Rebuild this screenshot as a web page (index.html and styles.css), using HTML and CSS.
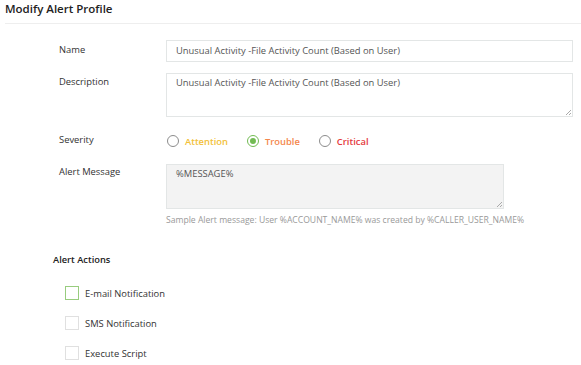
FILE: index.html
```html
<!DOCTYPE html>
<html>
<head>
<meta charset="utf-8">
<link rel="stylesheet" href="styles.css">
</head>
<body>
<div class="page">
  <h1 class="title">Modify Alert Profile</h1>
  <div class="form">
    <div class="row row-name">
      <label class="label">Name</label>
      <div class="input">Unusual Activity -File Activity Count (Based on User)</div>
    </div>
    <div class="row row-desc">
      <label class="label">Description</label>
      <div class="textarea">Unusual Activity -File Activity Count (Based on User)<span class="grip"></span></div>
    </div>
    <div class="row row-sev">
      <label class="label">Severity</label>
      <div class="radios">
        <span class="radio-item"><span class="radio"></span><span class="sev attention">Attention</span></span>
        <span class="radio-item"><span class="radio checked"></span><span class="sev trouble">Trouble</span></span>
        <span class="radio-item"><span class="radio"></span><span class="sev critical">Critical</span></span>
      </div>
    </div>
    <div class="row row-msg">
      <label class="label">Alert Message</label>
      <div class="msg-col">
        <div class="textarea msg">%MESSAGE%<span class="grip"></span></div>
        <div class="hint">Sample Alert message: User %ACCOUNT_NAME% was created by %CALLER_USER_NAME%</div>
      </div>
    </div>
  </div>
  <h2 class="section">Alert Actions</h2>
  <div class="actions">
    <div class="check-item"><span class="box active"></span>E-mail Notification</div>
    <div class="check-item"><span class="box"></span>SMS Notification</div>
    <div class="check-item"><span class="box"></span>Execute Script</div>
  </div>
</div>
</body>
</html>
```
FILE: styles.css
```css
html, body {
  margin: 0;
  padding: 0;
  background: #ffffff;
}
body {
  font-family: "Open Sans", "Noto Sans", sans-serif;
  font-size: 9.4px;
  color: #333;
}
.page {
  width: 581px;
  height: 365px;
  overflow: hidden;
}
.title {
  margin: 0 0 0 5px;
  padding-top: 1px;
  height: 22px;
  line-height: 16px;
  font-size: 11.5px;
  font-weight: 600;
  color: #222;
  border-bottom: 1px solid #eeeeee;
}
.form {
  padding: 16px 8px 0 59px;
  display: flex;
  flex-direction: column;
}
.row {
  display: flex;
  align-items: flex-start;
}
.label {
  width: 107px;
  flex: none;
  color: #333;
  line-height: 16px;
}
.row-name .label { padding-top: 2px; }
.input {
  flex: 1;
  height: 20px;
  border: 1px solid #e3e6e6;
  padding: 0 9px;
  line-height: 20px;
  color: #555;
  box-sizing: content-box;
}
.row-desc { margin-top: 11px; }
.row-desc .label { padding-top: 1px; }
.textarea {
  position: relative;
  flex: 1;
  height: 42px;
  border: 1px solid #e3e6e6;
  padding: 0 9px;
  line-height: 18px;
  color: #555;
}
.grip {
  position: absolute;
  right: 1px;
  bottom: 1px;
  width: 5px;
  height: 5px;
  background: linear-gradient(135deg, transparent 45%, #aaa 45%, #aaa 55%, transparent 55%, transparent 75%, #aaa 75%, #aaa 85%, transparent 85%);
}
.row-sev {
  margin-top: 15px;
  height: 18px;
  align-items: center;
}
.row-sev .label { margin-top: -3px; }
.radios {
  display: flex;
  align-items: center;
}
.radio-item {
  display: inline-flex;
  align-items: center;
  margin-right: 18px;
}
.radio {
  width: 10px;
  height: 10px;
  border: 1.5px solid #8c8c8c;
  border-radius: 50%;
  margin: 0 6px 0 1px;
  position: relative;
  flex: none;
}
.radio.checked {
  border-color: #72bb53;
}
.radio.checked::after {
  content: "";
  position: absolute;
  left: 2px;
  top: 2px;
  width: 6px;
  height: 6px;
  border-radius: 50%;
  background: #72bb53;
}
.sev {
  font-weight: 600;
}
.attention { color: #f2c13a; }
.trouble { color: #f4874d; }
.critical { color: #e4393c; }
.row-msg { margin-top: 14px; }
.row-msg .label { padding-top: 0; }
.msg-col {
  display: flex;
  flex-direction: column;
}
.textarea.msg {
  flex: none;
  width: 318px;
  height: 43px;
  background: #f3f3f3;
  line-height: 18px;
}
.hint {
  margin-top: 3px;
  font-size: 8.6px;
  color: #999;
  line-height: 16px;
}
.section {
  margin: 25px 0 0 53px;
  font-size: 9.3px;
  font-weight: 600;
  color: #222;
  line-height: 14px;
}
.actions {
  margin: 19px 0 0 65px;
  display: flex;
  flex-direction: column;
  gap: 16px;
}
.check-item {
  display: flex;
  align-items: center;
  height: 14px;
  color: #333;
}
.box {
  width: 12px;
  height: 12px;
  border: 1px solid #e0e0e0;
  margin-right: 6px;
  flex: none;
}
.box.active {
  border-color: #98cc7e;
}
```
